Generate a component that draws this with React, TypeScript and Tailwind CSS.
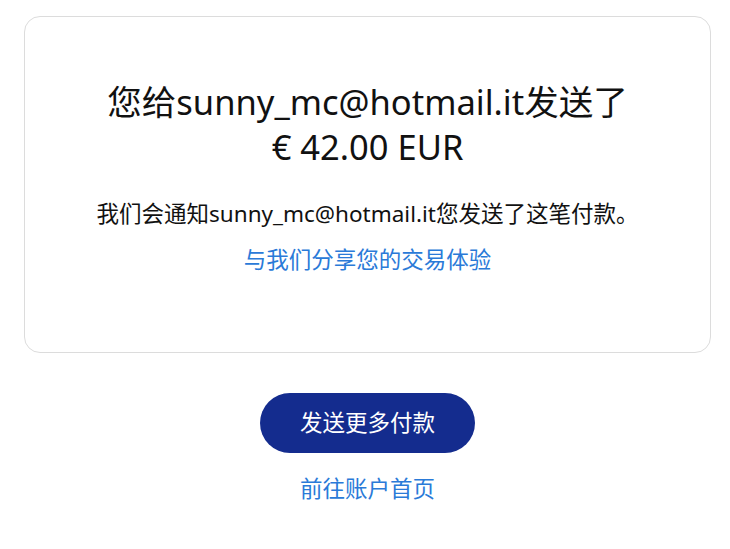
export default function App() {
  const font = { fontFamily: '"Noto Sans", "Noto Sans CJK SC", sans-serif' };
  return (
    <div className="w-[730px] h-[549px] bg-white pt-4 pl-6" style={font}>
      <div className="w-[687px] h-[337px] border border-[#dcdcdc] rounded-2xl flex flex-col items-center pt-[62px]">
        <h1 className="text-[34.5px] leading-[45px] text-[#111111] text-center whitespace-nowrap">
          您给sunny_mc@hotmail.it发送了
          <br />€ 42.00 EUR
        </h1>
        <p className="mt-[30px] text-[22.5px] leading-[30px] text-[#111111] whitespace-nowrap">
          我们会通知sunny_mc@hotmail.it您发送了这笔付款。
        </p>
        <a className="mt-[16px] text-[22.5px] leading-[30px] text-[#2a7ad8]">与我们分享您的交易体验</a>
      </div>
      <div className="w-[687px] flex flex-col items-center mt-10">
        <button className="w-[215px] h-[60px] rounded-full bg-[#142c8e] text-white text-[22.5px] leading-[30px]">
          发送更多付款
        </button>
        <a className="mt-[21px] text-[22.5px] leading-[30px] text-[#2a7ad8]">前往账户首页</a>
      </div>
    </div>
  );
}
